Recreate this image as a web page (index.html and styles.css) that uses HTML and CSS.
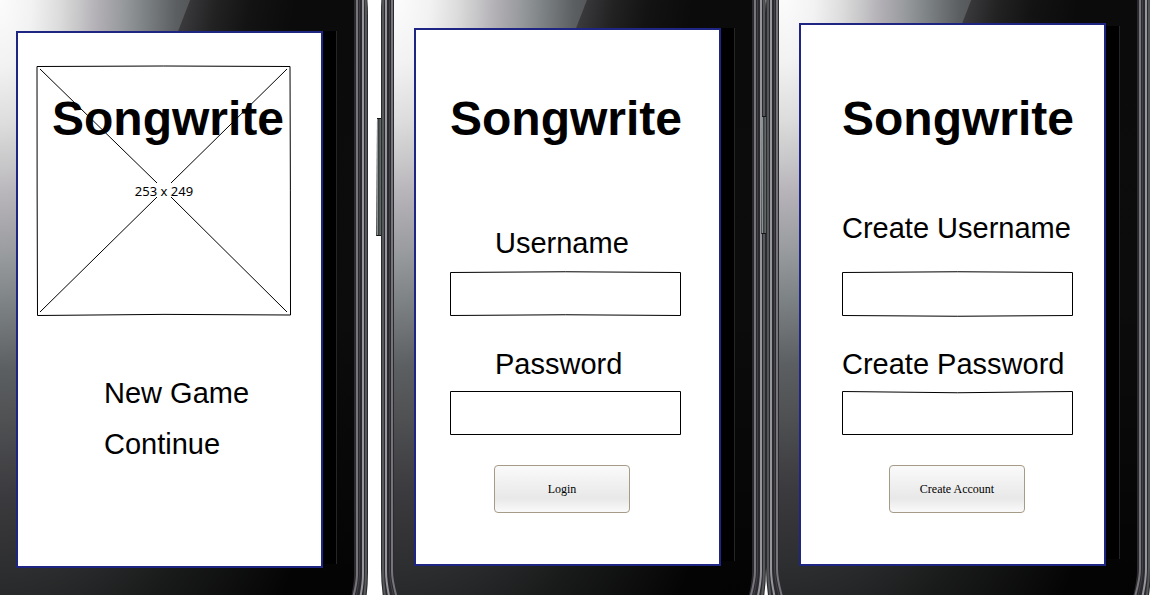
FILE: index.html
```html
<!DOCTYPE html>
<html lang="en">
<head>
<meta charset="utf-8">
<meta name="viewport" content="width=device-width, initial-scale=1">
<title>Songwrite</title>
<link rel="stylesheet" href="styles.css">
</head>
<body>
<svg class="defs" width="0" height="0" aria-hidden="true">
  <defs>
    <radialGradient id="metal" gradientUnits="userSpaceOnUse" cx="0" cy="0" r="1" gradientTransform="translate(17 0) scale(400 840)">
      <stop offset="0" stop-color="#fcfcfc"/>
      <stop offset=".08" stop-color="#f2f2f2"/>
      <stop offset=".15" stop-color="#dcdcdc"/>
      <stop offset=".2" stop-color="#c6c5c7"/>
      <stop offset=".24" stop-color="#b4b1b7"/>
      <stop offset=".31" stop-color="#96999c"/>
      <stop offset=".36" stop-color="#7e8385"/>
      <stop offset=".44" stop-color="#5c5f61"/>
      <stop offset=".5" stop-color="#4f5153"/>
      <stop offset=".59" stop-color="#3b3a3e"/>
      <stop offset=".68" stop-color="#2d2e2f"/>
      <stop offset=".8" stop-color="#191a1a"/>
      <stop offset="1" stop-color="#040404"/>
    </radialGradient>
    <linearGradient id="gloss" gradientUnits="userSpaceOnUse" x1="200" y1="0" x2="310" y2="20">
      <stop offset="0" stop-color="#3c3b3e"/>
      <stop offset=".3" stop-color="#222223"/>
      <stop offset=".6" stop-color="#131313"/>
      <stop offset="1" stop-color="#0b0b0b"/>
    </linearGradient>
    <linearGradient id="side" x1="0" y1="0" x2="0" y2="1">
      <stop offset="0" stop-color="#0b0b0b"/>
      <stop offset=".5" stop-color="#0c0c0c"/>
      <stop offset="1" stop-color="#030303"/>
    </linearGradient>
    <linearGradient id="key" x1="0" y1="0" x2="1" y2="0">
      <stop offset="0" stop-color="#303232"/>
      <stop offset=".3" stop-color="#8b9292"/>
      <stop offset=".5" stop-color="#3c4040"/>
      <stop offset="1" stop-color="#6a7070"/>
    </linearGradient>
    <g id="frame" fill="none">
      <path fill="#2b2a2e" d="M2-10Q0 0 0 16V572Q0 592 4 612H381Q385 592 385 572V16Q385 0 383-10Z"/>
      <path stroke="#555858" stroke-width="2" d="M3-10Q2 0 2 16V572Q2 590 6 612M382-10Q383 0 383 16V572Q383 590 379 612"/>
      <path stroke="#98969d" stroke-width="2" d="M5-10V574Q5 588 11 612M380-10V574Q380 588 374 612"/>
      <path stroke="#424146" d="M8.500-10V574Q9 588 16 612M376.500-10V574Q376 588 369 612"/>
      <path stroke="#77747c" stroke-width="2" d="M11-10V574Q11 586 19 612M374-10V574Q374 586 366 612"/>
      <path fill="url(#metal)" d="M13-10V574Q14 590 21 612H364Q371 590 371 574V-10Z"/>
      <path fill="url(#gloss)" d="M211-10H371V300H91Z"/>
      <path fill="url(#side)" d="M340 20H371V574Q370 590 364 612H340Z"/>
      <path fill="#000" d="M340 31H353V564H340Z"/>
      <path stroke="#252525" d="M353.500 31V564"/>
    </g>
    <g id="volume">
      <path fill="url(#key)" d="M-4 121H0V239H-5Z"/>
      <path fill="#161616" d="M-4 121H0V122H-4ZM-5 238H0V239H-4Z"/>
    </g>
  </defs>
</svg>

<main class="board">
  <section class="phone phone-start">
    <svg class="shell" viewBox="17 0 368 595" preserveAspectRatio="none" aria-hidden="true">
      <use href="#frame"/>
    </svg>
    <div class="screen">
      <div class="cover">
        <svg class="placeholder" viewBox="0 0 256 252" preserveAspectRatio="none" role="img" aria-label="Image placeholder">
          <g fill="none" stroke="#000">
            <path d="M1 1.500Q128 .5 254 1.500Q254.500 126 254.500 250Q128 248.500 1.500 250.500Q1 126 1 1.500"/>
            <path d="M4 4L121 118M135 132L251 247M251 4L135 118M121 132L4 247"/>
          </g>
        </svg>
        <h1 class="title">Songwrite</h1>
        <span class="size">253 x 249</span>
      </div>
      <nav class="menu">
        <a href="#new">New Game</a>
        <a href="#continue">Continue</a>
      </nav>
    </div>
  </section>

  <section class="phone phone-login">
    <svg class="shell" viewBox="0 0 385 595" preserveAspectRatio="none" aria-hidden="true">
      <g transform="translate(0 -3)"><use href="#frame"/><use href="#volume"/></g>
    </svg>
    <form class="screen">
      <h1 class="title">Songwrite</h1>
      <label for="user">Username</label>
      <div class="field">
        <svg viewBox="0 0 231 45" preserveAspectRatio="none" aria-hidden="true"><path d="M.5 1.500Q115 0 230.500 1.500V44.500Q115 43 .5 44.500Z"/></svg>
        <input id="user" type="text">
      </div>
      <label for="pass">Password</label>
      <div class="field">
        <svg viewBox="0 0 231 45" preserveAspectRatio="none" aria-hidden="true"><path d="M.5 1.500H230.500V44.500H.5Z"/></svg>
        <input id="pass" type="password">
      </div>
      <button type="button">Login</button>
    </form>
  </section>

  <section class="phone phone-create">
    <svg class="shell" viewBox="0 0 384 595" preserveAspectRatio="none" aria-hidden="true">
      <g transform="translate(0 -5)"><use href="#frame"/><use href="#volume"/></g>
    </svg>
    <form class="screen">
      <h1 class="title">Songwrite</h1>
      <label for="new-user">Create Username</label>
      <div class="field">
        <svg viewBox="0 0 231 45" preserveAspectRatio="none" aria-hidden="true"><path d="M.5 1.500Q115 0 230.500 1.500V44.500Q115 46 .5 44.500Z"/></svg>
        <input id="new-user" type="text">
      </div>
      <label for="new-pass">Create Password</label>
      <div class="field">
        <svg viewBox="0 0 231 45" preserveAspectRatio="none" aria-hidden="true"><path d="M.5 1.500Q115 4 230.500 1.500V44.500H.5Z"/></svg>
        <input id="new-pass" type="password">
      </div>
      <button type="button">Create Account</button>
    </form>
  </section>
</main>
</body>
</html>
```
FILE: styles.css
```css
* {
  box-sizing: border-box;
}

body {
  margin: 0;
  background: #fff;
  color: #000;
  font-family: "Liberation Sans", Arial, sans-serif;
}

.defs {
  position: absolute;
}

.board {
  display: grid;
  grid-template-columns: minmax(0, 368fr) minmax(0, 13fr) minmax(0, 385fr) minmax(0, 384fr);
  min-height: 100vh;
  overflow: hidden;
}

.phone {
  position: relative;
  display: flex;
}

.phone-start {
  grid-column: 1;
  padding: 31px 45px 27px 16px;
}

.phone-login {
  grid-column: 3;
  padding: 28px 45px 29px 33px;
}

.phone-create {
  grid-column: 4;
  padding: 23px 44px 29px 33px;
}

.shell {
  position: absolute;
  inset: 0;
  width: 100%;
  height: 100%;
  overflow: visible;
}

.screen {
  position: relative;
  flex: 1;
  display: flex;
  flex-direction: column;
  min-width: 0;
  background: #fff;
  border: 2px solid #1f2582;
}

.phone-start .shell {
  overflow: hidden;
}

.phone-start .screen {
  padding: 32px 29px 40px 18px;
}

.phone-login .screen {
  padding: 61px 38px 40px 34px;
}

.phone-create .screen {
  padding: 66px 31px 40px 41px;
}

.title {
  margin: 0;
  font-size: 48px;
  line-height: 56px;
  font-weight: bold;
  white-space: nowrap;
}

.cover {
  display: grid;
  height: 252px;
}

.cover > * {
  grid-area: 1 / 1;
}

.placeholder {
  width: 100%;
  height: 252px;
}

.cover .title {
  padding: 26px 0 0 16px;
}

.size {
  place-self: center;
  font: 13px/16px "Noto Sans", sans-serif;
}

.menu {
  display: flex;
  flex-direction: column;
  align-items: flex-start;
  gap: 17px;
  padding: 59px 0 0 68px;
}

.menu a,
label {
  color: inherit;
  font-size: 29px;
  line-height: 34px;
  text-decoration: none;
  white-space: nowrap;
}

.field {
  display: grid;
  height: 45px;
  margin-bottom: 30px;
}

.field > * {
  grid-area: 1 / 1;
  width: 100%;
  height: 45px;
}

.field svg {
  overflow: visible;
}

.field path {
  fill: none;
  stroke: #000;
}

.field input {
  padding: 0 10px;
  border: 0;
  background: transparent;
  font: 20px "Liberation Sans", Arial, sans-serif;
}

label {
  margin-top: 1px;
  margin-bottom: 9px;
}

.title + label {
  margin-top: 79px;
  margin-bottom: 11px;
}

.phone-login label {
  padding-left: 45px;
}

.phone-create .title + label {
  margin-top: 64px;
  margin-bottom: 26px;
}

button {
  width: 136px;
  height: 48px;
  margin-left: 44px;
  border: 1px solid #a69b86;
  border-radius: 4px;
  background: linear-gradient(#fafafa, #e8e8e8 70%, #fafafa);
  color: #000;
  font: 12px "Liberation Serif", "Times New Roman", serif;
}

.phone-create button {
  margin-left: 47px;
}
```
